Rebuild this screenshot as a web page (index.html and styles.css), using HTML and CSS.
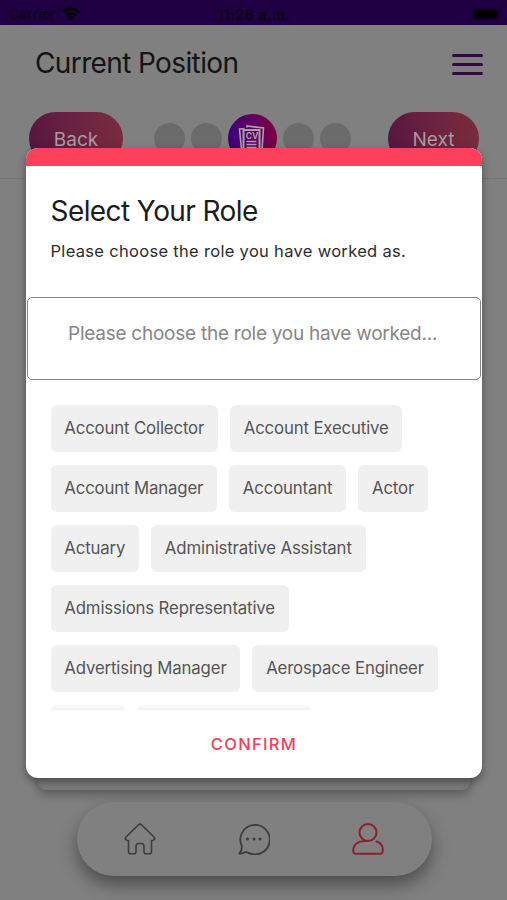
FILE: index.html
```html
<!DOCTYPE html>
<html lang="en">
<head>
<meta charset="utf-8">
<title>Current Position</title>
<link rel="stylesheet" href="styles.css">
</head>
<body>
<div class="app">
  <div class="status">
    <div class="carrier"><span>Carrier</span>
      <svg width="18" height="14" viewBox="0 0 18 14"><path d="M0 4.2a13 13 0 0 1 18 0l-1.8 2a10.300 10.300 0 0 0-14.400 0zM3 7.300a8.700 8.700 0 0 1 12 0l-1.900 2a6 6 0 0 0-8.200 0zM6 10.400a4.500 4.500 0 0 1 6 0l-3 3.200z"/></svg>
    </div>
    <b class="time">11:26 a.m.</b>
    <div class="battery"><i></i></div>
  </div>
  <header class="header">
    <h1>Current Position</h1>
    <div class="menu"><i></i><i></i><i></i></div>
  </header>
  <div class="steps">
    <span class="pill back">Back</span>
    <div class="dots">
      <i></i><i></i>
      <span class="current">
        <svg width="30" height="32" viewBox="0 0 30 32" fill="none" stroke="#aaa1ac" stroke-width="1.6"><path d="M4.500 27L2.500 6l5-.5M10 4.500V3l16.500 2L25 27"/><path d="M6.500 7h16v23h-16z" stroke-width="2"/><path d="M9.500 18.500h10M9.500 21.500h10M9.500 24.500h10" stroke-width="1.500"/><text x="8.700" y="15.700" class="cv">CV</text></svg>
      </span>
      <i></i><i></i>
    </div>
    <span class="pill next">Next</span>
  </div>
  <main class="content"><div class="card"></div></main>
  <nav class="tabs">
    <svg class="home" width="32" height="32" viewBox="0 0 32 32"><path d="M14.500 1.800Q16 .5 17.500 1.800L30 14Q31.200 15.500 30 16.700Q29.300 17.500 27.500 17.500V28.500Q27.500 30.800 25.500 30.800H22Q20 30.800 20 28.500V23.500Q20 20.500 17.500 20.500H14.500Q12 20.500 12 23.500V28.500Q12 30.800 10 30.800H6.500Q4.500 30.800 4.500 28.500V17.500Q2.700 17.500 2 16.700Q.8 15.500 2 14Z"/></svg>
    <svg width="32" height="32" viewBox="0 0 32 32"><path d="M4 23.500A14.700 14.700 0 1 1 10 29.600Q8 28.800 6 29.600Q3.500 30.700 1.200 30.500Q4 27.500 4 23.500Z"/><path class="ellipsis" d="M9.500 16h.01M16 16h.01M22 16h.01"/></svg>
    <svg class="active" width="32" height="32" viewBox="0 0 32 32"><circle cx="16" cy="9.500" r="8.500"/><path d="M15 18C5.500 17.500 1.200 22 1.200 27.500Q1 30.800 4 30.800H28Q31 30.800 30.800 27.500C30.800 22.500 28.500 19.500 24.500 18.500"/></svg>
  </nav>
</div>
<section class="modal">
  <div class="accent"></div>
  <div class="intro"><h2>Select Your Role</h2><p>Please choose the role you have worked as.</p></div>
  <div class="search">Please choose the role you have worked...</div>
  <div class="roles">
    <div class="row"><span>Account Collector</span><span>Account Executive</span></div>
    <div class="row"><span>Account Manager</span><span>Accountant</span><span>Actor</span></div>
    <div class="row"><span>Actuary</span><span>Administrative Assistant</span></div>
    <div class="row"><span>Admissions Representative</span></div>
    <div class="row"><span>Advertising Manager</span><span>Aerospace Engineer</span></div>
    <div class="row cut"><span class="short"></span><span class="long"></span></div>
  </div>
  <div class="confirm">CONFIRM</div>
</section>
</body>
</html>
```

FILE: styles.css
```css
* { box-sizing: border-box; }
body { margin: 0; width: 507px; height: 900px; overflow: hidden; position: relative; font-family: Inter, "Liberation Sans", sans-serif; background: #808080; }
h1, h2, p { margin: 0; font-weight: 400; }
.app { height: 900px; display: flex; flex-direction: column; }
.status { height: 25px; flex: none; display: grid; grid-template-columns: 1fr auto 1fr; align-items: center; background: #200042; padding: 3px 8px 0 9px; font-size: 13.5px; color: #08000f; }
.carrier { display: flex; align-items: center; gap: 6px; letter-spacing: .35px; }
.carrier svg { fill: #000; }
.time { font-weight: 600; font-size: 14px; letter-spacing: .6px; }
.battery { justify-self: end; width: 27px; height: 12px; padding: 2px; border-radius: 4px; background: #15002a; }
.battery i { display: block; height: 8px; width: 23px; border-radius: 2px; background: #000; }
.header { height: 75px; flex: none; display: flex; justify-content: space-between; align-items: center; padding: 0 24px 0 35px; }
.header h1 { font-size: 28px; letter-spacing: -.62px; color: #141414; }
.menu { width: 31px; display: grid; gap: 6px; padding-top: 4px; }
.menu i { height: 3px; border-radius: 2px; background: #350745; }
.steps { height: 79px; flex: none; display: flex; justify-content: space-between; align-items: flex-start; padding: 12px 28px 0 29px; border-bottom: 1px solid #747474; }
.pill { height: 53px; border-radius: 27px; display: grid; place-items: center; padding-top: 1px; font-size: 19px; color: #a89aa0; background: linear-gradient(75deg, #531540 0%, #6c2341 55%, #7a2d3c 100%); }
.back { width: 94px; }
.next { width: 91px; }
.dots { display: flex; align-items: center; gap: 6px; height: 53px; margin-right: 7px; }
.dots i { width: 31px; height: 31px; border-radius: 50%; background: #6b6b6b; }
.current { width: 49px; height: 49px; border-radius: 50%; display: grid; place-items: center; background: linear-gradient(80deg, #37007e, #68005b 65%, #800038); }
.cv { font: 700 8.5px Inter, sans-serif; fill: #aaa1ac; stroke: none; }
.content { flex: 1; padding: 60px 37px 0 38px; }
.card { height: 551px; border-radius: 8px; background: #7b7b7b; box-shadow: 0 5px 10px rgba(0,0,0,.28); }
.tabs { width: 355px; height: 74px; flex: none; margin: 0 auto 24px 77px; border-radius: 37px; background: #808080; box-shadow: 0 9px 17px rgba(0,0,0,.4); display: flex; justify-content: space-between; align-items: center; padding: 0 48px 0 47px; }
.tabs svg { fill: none; stroke: #3c3c3c; stroke-width: 1.8; stroke-linecap: round; stroke-linejoin: round; }
.tabs .home { stroke-width: 1.6; }
.tabs .ellipsis { stroke-width: 3; }
.tabs .active { stroke: #8c202f; stroke-width: 2; }
.modal { position: absolute; left: 26px; top: 148px; width: 456px; height: 630px; background: #fff; border-radius: 12px; overflow: hidden; box-shadow: 0 4px 9px rgba(0,0,0,.38); display: flex; flex-direction: column; }
.accent { height: 18px; flex: none; background: #fd415c; }
.intro { height: 131px; flex: none; padding: 27px 24.5px 0; }
.intro h2 { font-size: 28px; line-height: 36px; letter-spacing: -.58px; color: #1c1c1c; }
.intro p { font-size: 16.5px; line-height: 22px; margin-top: 11px; letter-spacing: .31px; color: #2d2d2d; white-space: nowrap; }
.search { height: 83px; flex: none; border: 1px solid #858585; border-radius: 5px; margin: 0 1px; padding: 23px 40px; font-size: 19px; line-height: 26px; letter-spacing: -.25px; color: #868686; white-space: nowrap; }
.roles { height: 330px; flex: none; padding: 24.5px 24.5px 0; display: flex; flex-direction: column; gap: 12.500px; overflow: hidden; }
.row { display: flex; gap: 12px; flex: none; }
.row span { height: 47.500px; padding: 0 13.8px; border-radius: 6px; background: #f0f0f0; color: #555; font-size: 16.8px; line-height: 47px; letter-spacing: -.15px; white-space: nowrap; }
.row .short { width: 74px; }
.row .long { width: 174px; }
.cut span { background: linear-gradient(#fafafa, #efefef 6px); }
.confirm { flex: 1; padding-top: 23px; text-align: center; color: #f0405c; font-size: 16.5px; line-height: 22px; font-weight: 500; letter-spacing: 1.300px; }
```
